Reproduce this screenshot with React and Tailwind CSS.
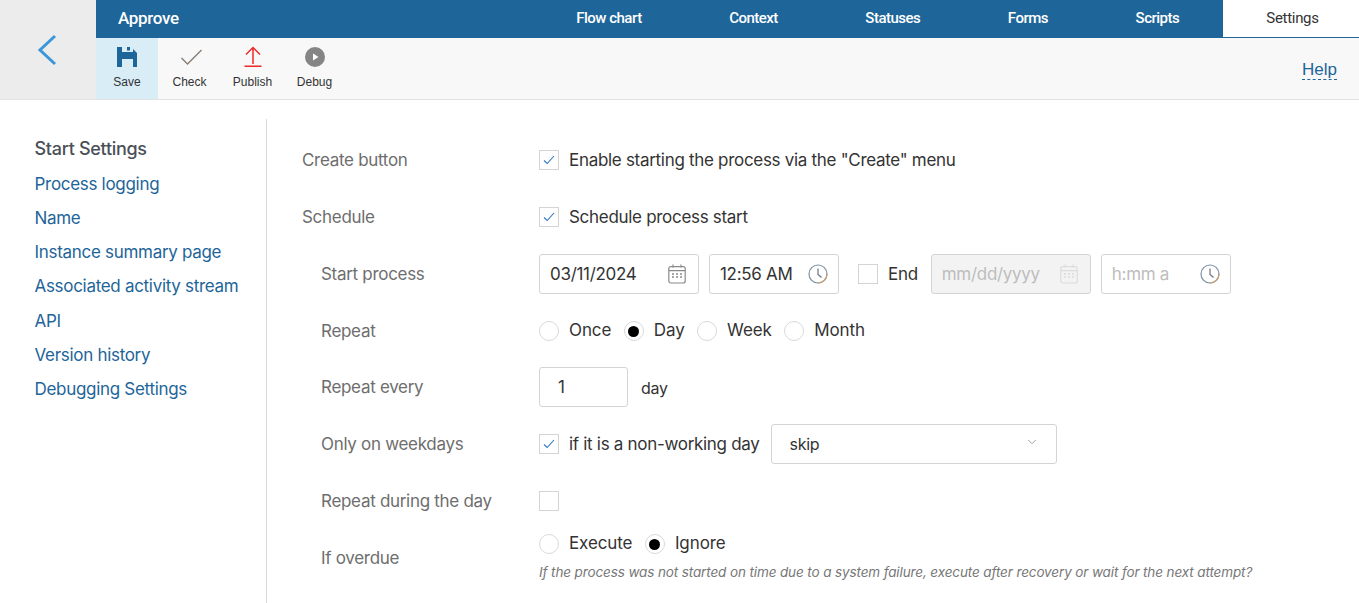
import React from 'react';
import { ChevronDown } from 'lucide-react';

const tabs = ['Flow chart', 'Context', 'Statuses', 'Forms', 'Scripts'];
const menu = ['Process logging', 'Name', 'Instance summary page', 'Associated activity stream', 'API', 'Version history', 'Debugging Settings'];

const CheckBox = ({ checked }) => (
  <span className="w-5 h-5 shrink-0 border border-[#d4d4d4] bg-white flex items-center justify-center">
    {checked && (
      <svg width="12" height="10" viewBox="0 0 12 10" fill="none">
        <path d="M1 5.5 L4.2 8.5 L11 1" stroke="#2f76c4" strokeWidth="1.1" />
      </svg>
    )}
  </span>
);

const Radio = ({ label, checked }) => (
  <span className="flex items-center h-5">
    <span className="w-5 h-5 rounded-full border border-[#d9d9d9] bg-white flex items-center justify-center">
      {checked && <span className="w-[11px] h-[11px] rounded-full bg-black" />}
    </span>
    <span className="ml-[10px] tracking-[-0.1px]">{label}</span>
  </span>
);

const CalendarIcon = ({ color = '#8a8a8a' }) => (
  <svg width="18" height="20" viewBox="0 0 18 20" fill="none" stroke={color} strokeWidth="1.2">
    <rect x="0.8" y="2.6" width="16.4" height="16.4" rx="2" />
    <path d="M1 6.6 H17 M5 0.5 V3.5 M13 0.5 V3.5" />
    <path d="M4 10 h2 M8 10 h2 M12 10 h2 M4 13 h2 M8 13 h2 M12 13 h2" strokeWidth="1.6" />
  </svg>
);

const ClockIcon = () => (
  <svg width="20" height="20" viewBox="0 0 20 20" fill="none">
    <circle cx="10" cy="10" r="9" stroke="#7a8fa3" strokeWidth="1.2" />
    <path d="M19 10 A9 9 0 0 1 10 19" stroke="#c9a06e" strokeWidth="1.2" />
    <path d="M10 4.5 V10.5 L13.5 13.5" stroke="#6b7280" strokeWidth="1.2" />
  </svg>
);

const Row = ({ label, nested, className, children }) => (
  <div className={`flex items-center ${className}`}>
    <div className={`w-[237px] shrink-0 pt-[2px] text-[#6e6e6e] ${nested ? 'pl-[19px]' : ''}`}>{label}</div>
    {children}
  </div>
);

const Field = ({ w, children, className = '' }) => (
  <div className={`${w} h-10 shrink-0 rounded-[3px] border border-[#d4d4d4] flex items-center justify-between pl-[10px] ${className}`}>
    {children}
  </div>
);

export default function App() {
  return (
    <div className="w-[1359px] h-[603px] overflow-hidden bg-white text-[#333] text-[17px] tracking-[-0.3px] font-['Inter',sans-serif]">
      {/* Header */}
      <div className="flex h-[100px] border-b border-[#e2e2e2]">
        <div className="w-[96px] bg-[#ececec] flex items-center justify-center">
          <svg className="-ml-[2px]" width="20" height="32" viewBox="0 0 20 32" fill="none">
            <path d="M18 2 L3 16 L18 30" stroke="#3b97da" strokeWidth="3" />
          </svg>
        </div>
        <div className="flex-1 flex flex-col">
          <div className="h-[38px] bg-[#1e6599] flex items-center font-['Roboto',sans-serif] text-white">
            <div className="pl-[22px] text-[17px] font-medium flex-1 -mt-[1px]">Approve</div>
            {tabs.map(tab => (
              <div key={tab} className="px-[43.75px] text-[15px] font-medium tracking-[-0.5px] -mt-[1px]">{tab}</div>
            ))}
            <div className="w-[136px] h-[38px] pl-[3px] bg-white border-b border-[#1e6599] text-[#333] text-[15px] tracking-[-0.3px] flex items-center justify-center">Settings</div>
          </div>
          <div className="flex-1 bg-[#f8f8f8] flex items-stretch font-['Liberation_Sans',sans-serif] text-[12px] tracking-normal text-[#333]">
            <div className="w-[62px] bg-[#d9edf7] flex flex-col items-center pt-[8px]">
              <svg width="22" height="22" viewBox="0 0 22 22">
                <path fill="#1e6599" d="M1 1 H6 V6 H17 V3 L21 7 V21 H17 V13 H6 V21 H1 Z M11 1 H14 V4.5 H11 Z" />
              </svg>
              <span className="mt-[5px]">Save</span>
            </div>
            <div className="w-[63px] flex flex-col items-center pt-[8px]">
              <svg width="24" height="22" viewBox="0 0 24 22" fill="none">
                <path d="M3.5 12 L9.5 18 L23.5 4" stroke="#8a8078" strokeWidth="1.5" />
              </svg>
              <span className="mt-[5px]">Check</span>
            </div>
            <div className="w-[63px] flex flex-col items-center pt-[8px]">
              <svg className="ml-[1px]" width="22" height="22" viewBox="0 0 22 22" fill="none" stroke="#ee2a2a" strokeWidth="1.5">
                <path d="M11 18 V2 M4 8.5 L11 1.5 L18 8.5 M2.5 20.2 H19.5" />
              </svg>
              <span className="mt-[5px]">Publish</span>
            </div>
            <div className="w-[61px] flex flex-col items-center pt-[8px]">
              <svg width="22" height="22" viewBox="0 0 22 22">
                <circle cx="11" cy="11" r="10" fill="#858585" />
                <path d="M9 7.5 L14.5 11 L9 14.5 Z" fill="#fff" />
              </svg>
              <span className="mt-[5px]">Debug</span>
            </div>
            <div className="ml-auto mr-[22px] mt-[21px] h-[21px] text-[17px] leading-[21px] text-[#1e6599] border-b border-dashed border-[#1e6599]">Help</div>
          </div>
        </div>
      </div>

      {/* Body */}
      <div className="flex pt-[19px]">
        <div className="w-[267px] h-[484px] shrink-0 border-r border-[#d9d9d9] pl-[34.5px] pt-[18px] text-[17px] leading-[24px]">
          <div className="text-[18px] text-[#4a5058] font-medium mb-[11px]">Start Settings</div>
          <div className="flex flex-col gap-[10.15px] text-[#1e6599]">
            {menu.map(item => <div key={item}>{item}</div>)}
          </div>
        </div>
        <div className="flex-1 pl-[35px] pt-[21px]">
          <Row label="Create button" className="h-10 mb-[17px]">
            <CheckBox checked />
            <span className="ml-[10px] pt-[2px]">Enable starting the process via the "Create" menu</span>
          </Row>
          <Row label="Schedule" className="h-10 mb-[17px]">
            <CheckBox checked />
            <span className="ml-[10px] pt-[2px]">Schedule process start</span>
          </Row>
          <Row label="Start process" nested className="h-10 mb-[17px]">
            <Field w="w-[160px]" className="pr-[12px]">
              <span className="pt-[2px]">03/11/2024</span>
              <CalendarIcon />
            </Field>
            <Field w="w-[130px]" className="ml-[10px] pr-[10px]">
              <span className="pt-[2px]">12:56 AM</span>
              <ClockIcon />
            </Field>
            <span className="ml-[19px]"><CheckBox /></span>
            <span className="ml-[10px] pt-[2px]">End</span>
            <Field w="w-[160px]" className="ml-[13px] pr-[12px] bg-[#f3f3f3] text-[#bdbdbd]">
              <span className="pt-[2px]">mm/dd/yyyy</span>
              <CalendarIcon color="#dcdcdc" />
            </Field>
            <Field w="w-[130px]" className="ml-[10px] pr-[10px] text-[#bdbdbd]">
              <span className="pt-[2px]">h:mm a</span>
              <ClockIcon />
            </Field>
          </Row>
          <Row label="Repeat" nested className="h-10 mb-[16px]">
            <div className="flex items-center gap-[12.5px]">
              <Radio label="Once" />
              <Radio label="Day" checked />
              <Radio label="Week" />
              <Radio label="Month" />
            </div>
          </Row>
          <Row label="Repeat every" nested className="h-10 mb-[17px]">
            <Field w="w-[89px]" className="pl-[18px]"><span className="pt-[2px]">1</span></Field>
            <span className="ml-[13px] pt-[2px] text-[16px]">day</span>
          </Row>
          <Row label="Only on weekdays" nested className="h-10 mb-[17px]">
            <CheckBox checked />
            <span className="ml-[10px] pt-[2px]">if it is a non-working day</span>
            <Field w="w-[286px]" className="ml-[11px] pl-[18px] pr-[17px]">
              <span className="text-[16px]">skip</span>
              <ChevronDown className="text-[#8a8a8a] -mt-[4px]" size={14} strokeWidth={1.4} />
            </Field>
          </Row>
          <Row label="Repeat during the day" nested className="h-10 mb-[13px]">
            <CheckBox />
          </Row>
          <div className="flex">
            <div className="w-[237px] shrink-0 pl-[19px] pt-[12px] text-[#6e6e6e]">If overdue</div>
            <div>
              <div className="flex items-center gap-[12.5px]">
                <Radio label="Execute" />
                <Radio label="Ignore" checked />
              </div>
              <div className="mt-[8px] text-[13.5px] tracking-[-0.12px] italic text-[#777]">If the process was not started on time due to a system failure, execute after recovery or wait for the next attempt?</div>
            </div>
          </div>
        </div>
      </div>
    </div>
  );
}
